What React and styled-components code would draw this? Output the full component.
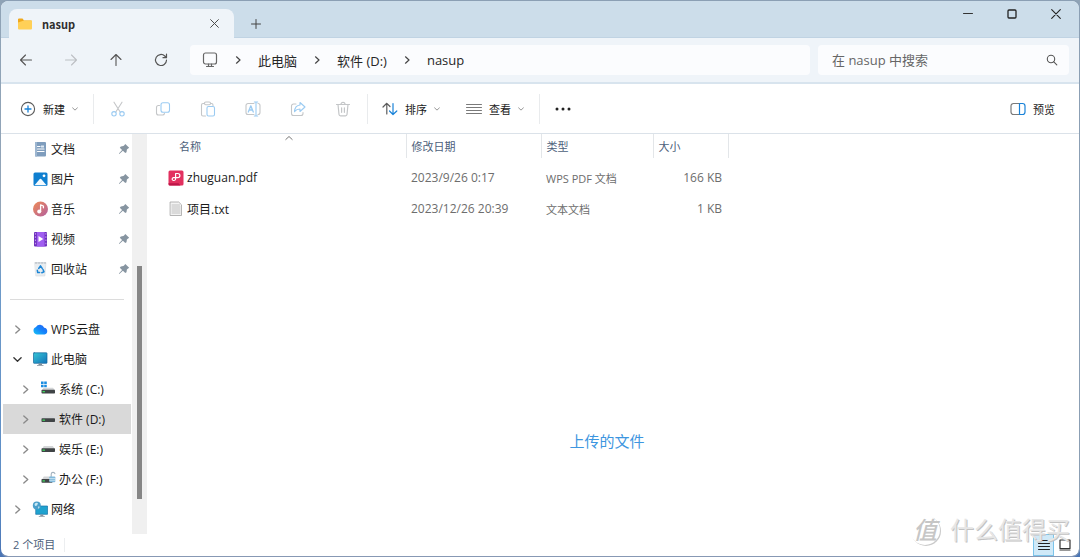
import React from "react";
import styled, { createGlobalStyle, css } from "styled-components";

const GlobalStyle = createGlobalStyle`
  *, *::before, *::after { box-sizing: border-box; }
  body {
    margin: 0;
    background: linear-gradient(180deg, #8fa3b6 0%, #93a6ba 45%, #6f9bc9 50%, #5b8cc6 90%, #4a74b4 100%);
    font-family: "Open Sans", "Noto Sans CJK SC", sans-serif;
    font-size: 12px;
    color: #1b1b1b;
  }
  button, input { font: inherit; color: inherit; }
`;

const Window = styled.div`
  display: flex;
  flex-direction: column;
  min-height: 100vh;
  border: 1px solid #8b9fb4;
  border-left-color: transparent;
  border-bottom-color: #8798b4;
  border-radius: 8px;
  background: #fff;
  background-clip: padding-box;
  overflow: hidden;
  position: relative;
`;

const PlainButton = styled.button`
  display: inline-flex;
  align-items: center;
  justify-content: center;
  padding: 0;
  border: 0;
  background: none;
`;

const TitleBar = styled.header`
  display: flex;
  align-items: flex-start;
  height: 37px;
  padding-left: 8px;
  background: #ccddea;
  box-shadow: inset 0 -1px #c0d3e3;
`;

const Tab = styled.div`
  display: flex;
  align-items: center;
  width: 225px;
  height: 29px;
  margin-top: 8px;
  padding: 0 15px 0 8px;
  border-radius: 8px 8px 0 0;
  background: #eff4f9;
`;

const TabTitle = styled.span`
  flex: 1;
  padding-left: 9px;
  font-family: "Noto Sans CJK SC", sans-serif;
  font-size: 11px;
  font-weight: 700;
  color: #2e2e2e;
`;

const NewTab = styled(PlainButton)`
  width: 44px;
  height: 29px;
  margin-top: 8px;
`;

const WindowControls = styled.div`
  display: flex;
  margin-left: auto;
  padding-right: 1px;
`;

const WindowButton = styled(PlainButton)`
  width: 44px;
  height: 26px;
`;

const NavBar = styled.nav`
  display: flex;
  align-items: center;
  height: 46px;
  padding: 0 10px 0 2px;
  border-bottom: 2px solid #d8e4ee;
  background: #eff4f9;
`;

const NavButton = styled(PlainButton)`
  width: 45px;
  height: 30px;
  color: #555;
  &:disabled { color: #bcc0c4; }
`;

const AddressBar = styled.div`
  display: flex;
  flex: 1;
  align-items: center;
  height: 30px;
  margin: 0 8px 0 7px;
  padding-left: 12px;
  border-radius: 4px;
  background: #fbfcfe;
  font-size: 13px;
`;

const Crumb = styled.a`
  color: #262626;
  text-decoration: none;
  white-space: nowrap;
`;

const CrumbArrow = styled.span`
  display: flex;
  justify-content: center;
  width: 40px;
`;

const SearchBox = styled.label`
  display: flex;
  align-items: center;
  width: 251px;
  height: 30px;
  padding: 0 11px 0 14px;
  border-radius: 4px;
  background: #fbfcfe;
  font-size: 13px;
`;

const SearchInput = styled.input`
  flex: 1;
  min-width: 0;
  padding: 0;
  border: 0;
  outline: 0;
  background: none;
  &::placeholder { color: #666; opacity: 1; }
`;

const Toolbar = styled.div`
  display: flex;
  align-items: center;
  height: 50px;
  border-bottom: 1px solid #dbe2e9;
  padding: 0 24px 0 19px;
  background: #fff;
`;

const Command = styled(PlainButton)`
  gap: 7px;
  height: 30px;
  white-space: nowrap;
  font-size: 11px;
`;

const PreviewCommand = styled(Command)`
  margin-left: auto;
`;

const IconCommand = styled(PlainButton)`
  width: 45px;
  height: 30px;
`;

const CommandGroup = styled.div`
  display: flex;
  align-items: center;
  gap: ${(p) => p.$gap || 0}px;
  padding: 0 ${(p) => p.$end || 0}px 0 ${(p) => p.$start || 0}px;
  height: 30px;
  border-right: 1px solid #e9ebed;
`;

const Body = styled.div`
  display: flex;
  flex: 1;
`;

const Sidebar = styled.aside`
  width: 131px;
  padding: 0 1px 10px 2px;
`;

const TreeList = styled.ul`
  margin: 0;
  padding: 0;
  list-style: none;
`;

const TreeItem = styled.li`
  display: flex;
  align-items: center;
  height: 30px;
  padding: 0 1px 0 ${(p) => (p.$level === 2 ? 15 : 7)}px;
  background: ${(p) => (p.$selected ? "#d9d9d9" : "transparent")};
`;

const Expander = styled(PlainButton)`
  width: 14px;
  height: 20px;
`;

const TreeLink = styled.a`
  display: flex;
  flex: 1;
  align-items: center;
  gap: 3px;
  padding-left: 8px;
  color: #1b1b1b;
  text-decoration: none;
  white-space: nowrap;
`;

const NoExpander = styled.span`
  width: 14px;
`;

const Divider = styled.hr`
  margin: 15px 7px 14px;
  border: 0;
  border-top: 1px solid #dcdcdc;
`;

const ScrollTrack = styled.div`
  display: flex;
  flex-direction: column;
  align-items: center;
  width: 15px;
  padding: 132px 0 35px;
  background: #f0f0f0;
`;

const ScrollThumb = styled.div`
  flex: 1;
  width: 5px;
  background: #868686;
`;

const Pane = styled.main`
  flex: 1;
  min-width: 0;
`;

const FileTable = styled.table`
  width: 581px;
  table-layout: fixed;
  border-collapse: collapse;
`;

const cell = css`
  padding: 0 6px 0 5px;
  text-align: left;
  white-space: nowrap;
  font-weight: 400;
`;

const HeadCell = styled.th`
  ${cell}
  position: relative;
  height: 24px;
  padding-left: ${(p) => (p.$name ? 32 : 5)}px;
  border-right: 1px solid #e3e6e9;
  color: #4c607a;
  font-size: 11px;
`;

const SortMark = styled.span`
  position: absolute;
  top: 0;
  left: calc(50% + 9px);
  display: flex;
`;

const TableGap = styled.tr`
  height: 4px;
  td { padding: 0; }
`;

const DataCell = styled.td`
  ${cell}
  height: 31px;
  color: #6d6d6d;
  font-size: ${(p) => (p.$cjk ? 11 : 12)}px;
  text-align: ${(p) => (p.$right ? "right" : "left")};
`;

const FileLink = styled.a`
  display: flex;
  align-items: center;
  gap: 3px;
  padding-left: 16px;
  color: #1b1b1b;
  text-decoration: none;
`;

const Note = styled.p`
  margin: 205px 0 0;
  padding-right: 12px;
  text-align: center;
  font-size: 15px;
  line-height: 24px;
  color: #3d96e0;
`;

const StatusBar = styled.footer`
  display: flex;
  align-items: center;
  height: 22px;
  padding: 0 4px 0 12px;
  color: #4c607a;
  font-size: 11px;
`;

const StatusText = styled.span`
  padding-right: 9px;
  border-right: 1px solid #eceef0;
  line-height: 14px;
`;

const ViewButtons = styled.div`
  display: flex;
  margin-left: auto;
`;

const ViewButton = styled(PlainButton)`
  width: 21px;
  height: 22px;
  border: ${(p) => (p.$active ? "1px solid #7cc4ea" : "0")};
  background: ${(p) => (p.$active ? "#cfe9f8" : "transparent")};
`;

const Watermark = styled.div`
  position: absolute;
  right: 9px;
  bottom: 9px;
  display: flex;
  align-items: center;
  gap: 10px;
  color: #e6e6e6;
  text-shadow: 1px 1px #c2c2c2;
  font-size: 24px;
  line-height: 34px;
  pointer-events: none;
`;

const WatermarkSeal = styled.span`
  display: flex;
  align-items: center;
  justify-content: center;
  width: 30px;
  height: 30px;
  border-radius: 50%;
  box-shadow: 1px 1px #cacaca;
  font-weight: 500;
  font-style: italic;
  color: #c6c6c6;
  text-shadow: none;
`;

const Svg = ({ w = 16, h = w, box = `0 0 ${w} ${h}`, children, ...rest }) => (
  <svg width={w} height={h} viewBox={box} fill="none" strokeLinecap="round" strokeLinejoin="round" aria-hidden="true" {...rest}>
    {children}
  </svg>
);

const FolderIcon = () => (
  <Svg>
    <path d="M1 3.500A1 1 0 0 1 2 2.500H5.500L7 4.500H14A1 1 0 0 1 15 5.500V8H1Z" fill="#f0a81c" />
    <path d="M1 6.500L7 4.500H14A1 1 0 0 1 15 5.500V12.500A1 1 0 0 1 14 13.500H2A1 1 0 0 1 1 12.500Z" fill="#ffd057" />
  </Svg>
);
const CloseIcon = ({ size = 8, color = "#4a4a4a" }) => (
  <Svg w={size} box="0 0 10 10" stroke={color} strokeWidth="1.100">
    <path d="M.7.7 9.300 9.300M9.300.7.7 9.300" />
  </Svg>
);
const Chevron = ({ dir = "right", size = 8, color = "#8a8a8a", width = 1.2 }) => {
  const paths = { right: "M2.500.8 6 4 2.500 7.200", down: "M.8 2.500 4 5.500 7.200 2.500", up: "M.8 5.500 4 2.500 7.200 5.500" };
  return (
    <Svg w={size} box="0 0 8 8" stroke={color} strokeWidth={width}>
      <path d={paths[dir]} />
    </Svg>
  );
};
const ArrowIcon = ({ turn = 0 }) => (
  <Svg w={14} stroke="currentColor" strokeWidth="1.100">
    <g transform={`rotate(${turn} 7 7)`}>
      <path d="M12.500 7H1.500M6.500 2 1.500 7l5 5" />
    </g>
  </Svg>
);
const RefreshIcon = () => (
  <Svg w={14} stroke="currentColor" strokeWidth="1.200">
    <path d="M12.500 7.200A5.500 5.500 0 1 1 10.800 3L12.300 4.600M12.500 1.200V4.700H9" />
  </Svg>
);
const MonitorIcon = () => (
  <Svg w={16} stroke="#666" strokeWidth="1.200">
    <rect x="1.500" y="1" width="13" height="11" rx="2" />
    <path d="M6.500 12v2.500M9.500 12v2.500M4.500 14.500h7" />
  </Svg>
);
const SearchIcon = () => (
  <Svg w={12} stroke="#555" strokeWidth="1.100">
    <circle cx="5" cy="5" r="3.700" />
    <path d="m7.800 7.800 3 3" />
  </Svg>
);
const NewIcon = () => (
  <Svg>
    <circle cx="8" cy="8" r="6.600" stroke="#5c5c5c" strokeWidth="1.100" />
    <path d="M8 5v6M5 8h6" stroke="#1982d8" strokeWidth="1.300" />
  </Svg>
);
const CutIcon = () => (
  <Svg strokeWidth="1.100">
    <path d="M4 1.200 10.200 11M12 1.200 5.800 11" stroke="#c4c6c8" />
    <circle cx="4" cy="12.800" r="2.200" stroke="#9bcbf2" />
    <circle cx="12" cy="12.800" r="2.200" stroke="#9bcbf2" />
  </Svg>
);
const CopyIcon = () => (
  <Svg strokeWidth="1.100">
    <path d="M4.500 4.500H3.500a2 2 0 0 0-2 2V12a2 2 0 0 0 2 2H7.500a2 2 0 0 0 2-1.500" stroke="#c4c6c8" />
    <rect x="6" y="1.800" width="8.500" height="9.500" rx="2" stroke="#9bcbf2" />
  </Svg>
);
const PasteIcon = () => (
  <Svg strokeWidth="1.100">
    <path d="M4.500 2.500H3A1.500 1.500 0 0 0 1.500 4v9.500A1.500 1.500 0 0 0 3 15h2.500M10.500 2.500H11.500A1.500 1.500 0 0 1 13 4v.5" stroke="#c4c6c8" />
    <rect x="4.500" y="1" width="6" height="2.700" rx="1.200" stroke="#c4c6c8" />
    <rect x="7" y="5.500" width="7.500" height="9.500" rx="1.500" stroke="#9bcbf2" />
  </Svg>
);
const RenameIcon = () => (
  <Svg strokeWidth="1.100">
    <path d="M9 2.500H3a2 2 0 0 0-2 2v7a2 2 0 0 0 2 2H9M13 2.500a2 2 0 0 1 2 2v7a2 2 0 0 1-2 2" stroke="#c4c6c8" />
    <path d="M3.300 11 5.800 4.800 8.300 11M4.200 9h3.200" stroke="#9bcbf2" strokeWidth="1.300" />
    <path d="M11 1v14M9.300 1h3.400M9.300 15h3.400" stroke="#9bcbf2" />
  </Svg>
);
const ShareIcon = () => (
  <Svg strokeWidth="1.100">
    <path d="M6 3H3.500a2 2 0 0 0-2 2v7.500a2 2 0 0 0 2 2H11a2 2 0 0 0 2-2V11.500" stroke="#c4c6c8" />
    <path d="M10 1.500 15 6l-5 4.500V8C7.500 8 6 8.700 4.500 10.700 4.700 7 6.500 4.300 10 4Z" stroke="#9bcbf2" />
  </Svg>
);
const DeleteIcon = () => (
  <Svg stroke="#c4c6c8" strokeWidth="1.200">
    <path d="M1.500 3.500h13M3 3.500l1 10a1.500 1.500 0 0 0 1.500 1.300h5A1.500 1.500 0 0 0 12 13.500l1-10M6 3.300a2 2 0 0 1 4 0M6.600 6.800v4.500M9.400 6.800v4.500" />
  </Svg>
);
const SortIcon = () => (
  <Svg strokeWidth="1.200">
    <path d="M4.800 13V2.500M1 6l3.800-3.700L8 5.500" stroke="#5c5c5c" />
    <path d="M11 2.500v10.700M7.500 10l3.500 3.500L14.800 10" stroke="#1982d8" />
  </Svg>
);
const ViewIcon = () => (
  <Svg stroke="#7a7a7a" strokeWidth="1">
    <path d="M.5 3.500h15M.5 6.500h15M.5 9.500h15M.5 12.500h15" />
  </Svg>
);
const MoreIcon = () => (
  <Svg fill="#222">
    <circle cx="2" cy="8" r="1.500" />
    <circle cx="8" cy="8" r="1.500" />
    <circle cx="14" cy="8" r="1.500" />
  </Svg>
);
const PreviewIcon = () => (
  <Svg strokeWidth="1.200">
    <path d="M9.500 2.500H3.500a2.500 2.500 0 0 0-2.500 2.500v6a2.500 2.500 0 0 0 2.500 2.500h6" stroke="#7a7a7a" />
    <path d="M9.500 2.500h3a2.500 2.500 0 0 1 2.500 2.500v6a2.500 2.500 0 0 1-2.500 2.500h-3Z" stroke="#1982d8" />
  </Svg>
);
const PinIcon = () => (
  <Svg w={12} fill="#8795a1">
    <path d="M7.300 1 11.200 4.700 9.800 5.700 8.900 6.600 8.500 9.300 7.300 10 4.900 7.700 1.300 11 .9 10.600 4.100 7 1.800 4.700 2.800 3.500 5.400 3.100 6.300 2.200Z" />
  </Svg>
);

const treeIcons = {
  doc: (
    <Svg>
      <rect x="3" y="1" width="11" height="14.500" rx="1" fill="#7f9dbd" />
      <path d="M3 1h2v14.500H3Z" fill="#9db6d0" />
      <path d="M5.500 5.500h2.500M5.500 8h6.500M5.500 10.500h6.500" stroke="#fff" strokeWidth="1.200" />
      <rect x="9" y="4.500" width="3" height="2" fill="#dfe9f3" />
    </Svg>
  ),
  picture: (
    <Svg>
      <rect x="1.500" y="1.500" width="14" height="13.500" rx="1.500" fill="#0f7fd0" />
      <path d="m2.500 14.200 5.300-6.200q.7-.6 1.400 0l5.300 6.200Z" fill="#f4fbff" />
      <circle cx="12" cy="4.800" r="1.400" fill="#fff" />
    </Svg>
  ),
  music: (
    <Svg>
      <defs>
        <linearGradient id="music" x1="0" y1="0" x2="1" y2="1">
          <stop stopColor="#ef8b55" />
          <stop offset="1" stopColor="#b3609f" />
        </linearGradient>
      </defs>
      <circle cx="8.500" cy="8" r="7.500" fill="url(#music)" />
      <circle cx="7.200" cy="10.500" r="2" fill="#fff" />
      <path d="M8.600 10.500V3.800l2.800 1.200v1.800" stroke="#fff" strokeWidth="1.300" />
    </Svg>
  ),
  video: (
    <Svg>
      <rect x="2" y="1" width="13" height="14.500" rx="1" fill="#6d2fbd" />
      <rect x="4.800" y="1" width="7.800" height="14.500" fill="#a05ef0" />
      <path d="M3.400 2.500v12M13.900 2.500v12" stroke="#c9a4ec" strokeWidth="1" strokeDasharray=".8 2.400" />
      <path d="M6.500 5v6l4.800-3Z" fill="#fff" />
    </Svg>
  ),
  bin: (
    <Svg>
      <path d="M3 1.500h11l-1.200 13.500H4.200Z" fill="#e9edf0" stroke="#d4d9dd" strokeWidth=".6" />
      <path d="M3.500 2h10" stroke="#a9b1b8" strokeDasharray="1.500 1.500" />
      <path d="M6.700 7.500 8.500 4.900l1.700 2.500M11 8.500l1 2.200-2.200 1M7.600 11.600H5.700L5.300 9.200" stroke="#1c86d6" strokeWidth="1.500" />
    </Svg>
  ),
  cloud: (
    <Svg>
      <defs>
        <linearGradient id="cloud" x1="0" y1="1" x2="1" y2="0">
          <stop stopColor="#18c5f4" />
          <stop offset=".5" stopColor="#1583fb" />
          <stop offset="1" stopColor="#2860f0" />
        </linearGradient>
      </defs>
      <path d="M4.800 13.500A3.900 3.900 0 0 1 4 6a4.500 4.500 0 0 1 8.200.8 3.400 3.400 0 0 1 .4 6.700Z" fill="url(#cloud)" />
    </Svg>
  ),
  pc: (
    <Svg>
      <defs>
        <linearGradient id="pc" x1="0" y1="0" x2="1" y2="1">
          <stop stopColor="#36c6d6" />
          <stop offset="1" stopColor="#1372b8" />
        </linearGradient>
      </defs>
      <rect x="1.500" y="1.800" width="13.500" height="10.500" rx=".6" fill="url(#pc)" stroke="#16669c" strokeWidth=".7" />
      <path d="M6.500 12.500h3.500v1.500h1.500v.8H5V14h1.500Z" fill="#7f8d99" />
    </Svg>
  ),
  system: (
    <Svg>
      <path d="M1 .5h2.600v2.600H1ZM4.200.5h2.600v2.600H4.200ZM1 3.700h2.600v2.600H1ZM4.200 3.700h2.600v2.600H4.200Z" fill="#1a8ce0" />
      <path d="M3.500 6.800h9.500l2 2.500H2Z" fill="#d4d6d8" />
      <rect x="1.500" y="8.800" width="13.500" height="3.700" rx=".7" fill="#404446" />
      <path d="M3 10.700h1.500" stroke="#3ddc5c" strokeWidth="1.200" />
    </Svg>
  ),
  drive: (
    <Svg>
      <path d="M3.800 5h9l2.200 3H2Z" fill="#d4d6d8" />
      <rect x="1.500" y="7.300" width="13.500" height="3.700" rx=".7" fill="#404446" />
      <path d="M3 9.200h1.500" stroke="#3ddc5c" strokeWidth="1.200" />
    </Svg>
  ),
  locked: (
    <Svg>
      <path d="M3.800 5.500h7l2.200 3H2Z" fill="#d4d6d8" />
      <rect x="1.500" y="8" width="11" height="3.700" rx=".7" fill="#404446" />
      <path d="M3 9.900h1.500" stroke="#3ddc5c" strokeWidth="1.200" />
      <path d="M11.200 5.500V3a1.900 1.900 0 0 1 3.700-.3" stroke="#a2b1bd" strokeWidth="1.100" />
      <rect x="9.300" y="5.500" width="6" height="5.800" rx=".8" fill="#80b9dc" />
      <path d="M9.500 7.500h5.600M9.500 9.300h5.600" stroke="#d8ecf7" strokeWidth=".7" />
    </Svg>
  ),
  network: (
    <Svg>
      <path d="M4 5h11.500v8.300H4Z" fill="#1fa2cf" stroke="#1573a8" strokeWidth=".7" />
      <path d="M8.300 13.500h3v1.700h-3ZM6.800 14.900h6v.8h-6Z" fill="#8795a1" />
      <circle cx="4.800" cy="4.600" r="4" fill="#4b9fca" />
      <path d="M2.500 3q2-2 3.500-.7L5 4.500 3 5ZM6 5.500l1.800.3L6.500 8Z" fill="#c9e9f4" />
    </Svg>
  ),
};

const PdfIcon = () => (
  <Svg>
    <rect x=".5" y=".5" width="15" height="15" rx="1.500" fill="#e2305f" />
    <path d="M.5 13.200h10l2 2.300H2A1.500 1.500 0 0 1 .5 14Z" fill="#bd1547" />
    <path d="M7.600 9V3.500H9.800a2.100 2.100 0 0 1 0 4.200H5.500a1.400 1.400 0 1 0 .2 2.800A1.700 1.700 0 0 0 7.600 9" stroke="#fff" strokeWidth="1.200" />
  </Svg>
);
const TextFileIcon = () => (
  <Svg>
    <path d="M2.500 1h8.200L13.500 3.800V14.500h-11Z" fill="#f3f3f3" stroke="#a3a3a3" strokeWidth=".8" />
    <path d="M4 4h7.500M4 6h8M4 8h8M4 10h8M4 12h8" stroke="#b4b4b4" strokeWidth=".8" />
  </Svg>
);
const DetailsIcon = () => (
  <Svg w={12} stroke="#222">
    <path d="M.5 1.500h11M.5 4.500h11M.5 7.500h11M.5 10.500h11" />
  </Svg>
);
const TilesIcon = () => (
  <Svg w={12} stroke="#333" strokeWidth="1.200">
    <rect x="1" y="1" width="10" height="8.500" />
    <path d="M1 11h10" />
  </Svg>
);

const pinned = [
  ["doc", "文档"],
  ["picture", "图片"],
  ["music", "音乐"],
  ["video", "视频"],
  ["bin", "回收站"],
];

const tree = [
  { icon: "cloud", name: "WPS云盘", level: 1 },
  { icon: "pc", name: "此电脑", level: 1, open: true },
  { icon: "system", name: "系统 (C:)", level: 2 },
  { icon: "drive", name: "软件 (D:)", level: 2, selected: true },
  { icon: "drive", name: "娱乐 (E:)", level: 2 },
  { icon: "locked", name: "办公 (F:)", level: 2 },
  { icon: "network", name: "网络", level: 1 },
];

const files = [
  { icon: <PdfIcon />, name: "zhuguan.pdf", date: "2023/9/26 0:17", type: "WPS PDF 文档", size: "166 KB" },
  { icon: <TextFileIcon />, name: "项目.txt", date: "2023/12/26 20:39", type: "文本文档", size: "1 KB" },
];

const disabledCommands = [
  ["剪切", CutIcon],
  ["复制", CopyIcon],
  ["粘贴", PasteIcon],
  ["重命名", RenameIcon],
  ["共享", ShareIcon],
  ["删除", DeleteIcon],
];

export default function App() {
  return (
    <>
      <GlobalStyle />
      <Window>
        <TitleBar>
          <Tab>
            <FolderIcon />
            <TabTitle>nasup</TabTitle>
            <PlainButton aria-label="关闭标签页"><CloseIcon size={9} /></PlainButton>
          </Tab>
          <NewTab aria-label="新建标签页">
            <Svg w={10} stroke="#444" strokeWidth="1"><path d="M5 .5v9M.5 5h9" /></Svg>
          </NewTab>
          <WindowControls>
            <WindowButton aria-label="最小化">
              <Svg w={10} stroke="#333"><path d="M.5 4.500h9" /></Svg>
            </WindowButton>
            <WindowButton aria-label="最大化">
              <Svg w={10} stroke="#222" strokeWidth="1.300"><rect x="1" y="1" width="8" height="8" rx="1" /></Svg>
            </WindowButton>
            <WindowButton aria-label="关闭"><CloseIcon size={10} color="#222" /></WindowButton>
          </WindowControls>
        </TitleBar>

        <NavBar>
          <NavButton aria-label="后退"><ArrowIcon /></NavButton>
          <NavButton aria-label="前进" disabled><ArrowIcon turn={180} /></NavButton>
          <NavButton aria-label="向上"><ArrowIcon turn={90} /></NavButton>
          <NavButton aria-label="刷新"><RefreshIcon /></NavButton>
          <AddressBar>
            <MonitorIcon />
            {["此电脑", "软件 (D:)", "nasup"].map((name) => (
              <React.Fragment key={name}>
                <CrumbArrow><Chevron color="#444" /></CrumbArrow>
                <Crumb href="#">{name}</Crumb>
              </React.Fragment>
            ))}
          </AddressBar>
          <SearchBox>
            <SearchInput type="text" placeholder="在 nasup 中搜索" aria-label="搜索" />
            <SearchIcon />
          </SearchBox>
        </NavBar>

        <Toolbar>
          <CommandGroup $end={15}>
            <Command><NewIcon />新建<Chevron dir="down" size={6} /></Command>
          </CommandGroup>
          <CommandGroup $start={1} $end={2}>
            {disabledCommands.map(([label, Icon]) => (
              <IconCommand key={label} aria-label={label} disabled><Icon /></IconCommand>
            ))}
          </CommandGroup>
          <CommandGroup $start={14} $end={15} $gap={26}>
            <Command><SortIcon />排序<Chevron dir="down" size={6} /></Command>
            <Command><ViewIcon />查看<Chevron dir="down" size={6} /></Command>
          </CommandGroup>
          <IconCommand aria-label="更多"><MoreIcon /></IconCommand>
          <PreviewCommand><PreviewIcon />预览</PreviewCommand>
        </Toolbar>

        <Body>
          <Sidebar>
            <TreeList>
              {pinned.map(([icon, name]) => (
                <TreeItem key={name}>
                  <NoExpander />
                  <TreeLink href="#">{treeIcons[icon]}{name}</TreeLink>
                  <PinIcon />
                </TreeItem>
              ))}
            </TreeList>
            <Divider />
            <TreeList>
              {tree.map((t) => (
                <TreeItem key={t.name} $level={t.level} $selected={t.selected}>
                  <Expander aria-label={"展开 " + t.name}>
                    <Chevron dir={t.open ? "down" : "right"} size={9} color={t.open ? "#333" : "#8a8a8a"} />
                  </Expander>
                  <TreeLink href="#">{treeIcons[t.icon]}{t.name}</TreeLink>
                </TreeItem>
              ))}
            </TreeList>
          </Sidebar>
          <ScrollTrack><ScrollThumb /></ScrollTrack>
          <Pane>
            <FileTable>
              <colgroup>
                <col width="259" />
                <col width="135" />
                <col width="112" />
                <col width="75" />
              </colgroup>
              <thead>
                <tr>
                  <HeadCell $name>名称<SortMark><Chevron dir="up" size={8} color="#777" width={1} /></SortMark></HeadCell>
                  <HeadCell>修改日期</HeadCell>
                  <HeadCell>类型</HeadCell>
                  <HeadCell>大小</HeadCell>
                </tr>
              </thead>
              <tbody>
                <TableGap aria-hidden="true"><td colSpan="4" /></TableGap>
                {files.map((f) => (
                  <tr key={f.name}>
                    <DataCell><FileLink href="#">{f.icon}{f.name}</FileLink></DataCell>
                    <DataCell>{f.date}</DataCell>
                    <DataCell $cjk>{f.type}</DataCell>
                    <DataCell $right>{f.size}</DataCell>
                  </tr>
                ))}
              </tbody>
            </FileTable>
            <Note>上传的文件</Note>
          </Pane>
        </Body>

        <StatusBar>
          <StatusText>2 个项目</StatusText>
          <ViewButtons>
            <ViewButton $active aria-label="详细信息"><DetailsIcon /></ViewButton>
            <ViewButton aria-label="大图标"><TilesIcon /></ViewButton>
          </ViewButtons>
        </StatusBar>
        <Watermark>
          <WatermarkSeal>值</WatermarkSeal>
          <span>什么值得买</span>
        </Watermark>
      </Window>
    </>
  );
}
